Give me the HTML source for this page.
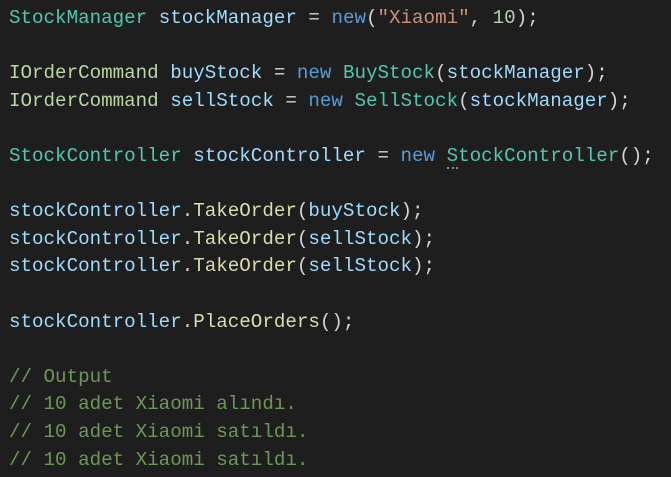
<!DOCTYPE html>
<html><head><meta charset="utf-8"><style>
html,body{margin:0;padding:0;background:#1e1e1e;width:671px;height:477px;overflow:hidden}
pre{margin:0;padding:5px 0 0 9px;font-family:"Liberation Mono",monospace;font-size:19.2px;line-height:27.6px;color:#d4d4d4;white-space:pre}
.t{color:#4ec9b0}.i{color:#b8d7a3}.v{color:#9cdcfe}.k{color:#569cd6}.s{color:#ce9178}.n{color:#b5cea8}.m{color:#dcdcaa}.c{color:#6a9955}
.u{border-bottom:2px dotted #888;}
</style></head><body><pre><span class="t">StockManager</span> <span class="v">stockManager</span> = <span class="k">new</span>(<span class="s">"Xiaomi"</span>, <span class="n">10</span>);

<span class="i">IOrderCommand</span> <span class="v">buyStock</span> = <span class="k">new</span> <span class="t">BuyStock</span>(<span class="v">stockManager</span>);
<span class="i">IOrderCommand</span> <span class="v">sellStock</span> = <span class="k">new</span> <span class="t">SellStock</span>(<span class="v">stockManager</span>);

<span class="t">StockController</span> <span class="v">stockController</span> = <span class="k">new</span> <span class="t"><span class="u">S</span>tockController</span>();

<span class="v">stockController</span>.<span class="m">TakeOrder</span>(<span class="v">buyStock</span>);
<span class="v">stockController</span>.<span class="m">TakeOrder</span>(<span class="v">sellStock</span>);
<span class="v">stockController</span>.<span class="m">TakeOrder</span>(<span class="v">sellStock</span>);

<span class="v">stockController</span>.<span class="m">PlaceOrders</span>();

<span class="c">// Output</span>
<span class="c">// 10 adet Xiaomi alındı.</span>
<span class="c">// 10 adet Xiaomi satıldı.</span>
<span class="c">// 10 adet Xiaomi satıldı.</span></pre></body></html>
